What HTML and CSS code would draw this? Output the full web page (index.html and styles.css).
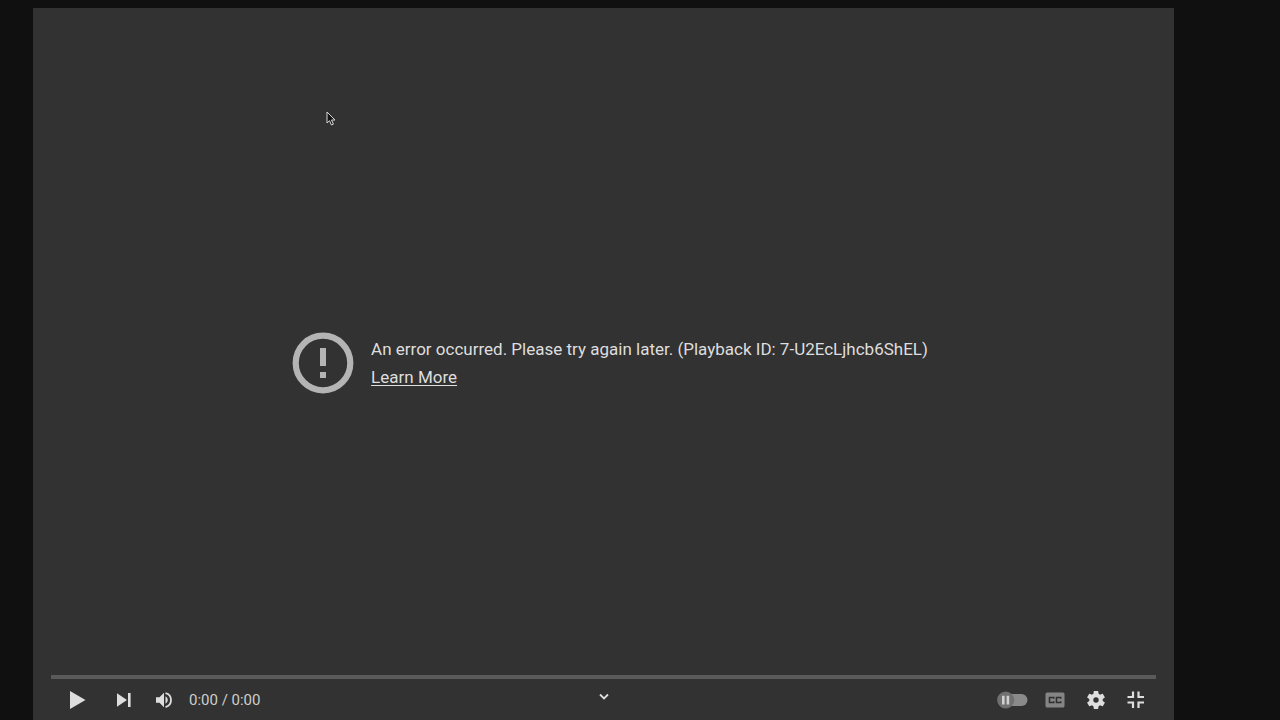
FILE: index.html
```html
<!DOCTYPE html>
<html lang="en">
<head>
<meta charset="utf-8">
<title>Video player</title>
<meta name="viewport" content="width=device-width, initial-scale=1">
<link rel="stylesheet" href="styles.css">
</head>
<body>
<main class="player">
  <section class="error" role="alert">
    <svg class="error-icon" viewBox="0 0 62 62" aria-hidden="true">
      <circle cx="31" cy="31" r="27.3" fill="none" stroke="currentColor" stroke-width="6.2"/>
      <path d="M28 16h6v18h-6zM28 40h6v6h-6z" fill="currentColor"/>
    </svg>
    <div class="error-text">
      <p class="error-line">An error occurred. Please try again later. (Playback ID: 7-U2EcLjhcb6ShEL)</p>
      <a class="error-link" href="#">Learn More</a>
    </div>
  </section>
  <footer class="chrome">
    <div class="progress"></div>
    <div class="controls">
      <div class="group group-left">
        <button class="btn btn-play" type="button" aria-label="Play">
          <svg width="16" height="20" viewBox="0 0 16 20"><path d="M0 1l15.500 9L0 19z" fill="currentColor"/></svg>
        </button>
        <button class="btn btn-next" type="button" aria-label="Next">
          <svg width="16" height="16" viewBox="0 0 16 16"><path d="M1 1.200L11 8 1 14.800zM12 1h2.600v14H12z" fill="currentColor"/></svg>
        </button>
        <button class="btn btn-volume" type="button" aria-label="Mute">
          <svg width="18" height="18" viewBox="0 0 18 18"><path d="M1 6.200h3.500L9 1.700v14.600l-4.500-4.500H1z" fill="currentColor"/><path d="M10.500 5.200a4.300 4.300 0 0 1 0 7.600z" fill="currentColor"/><path d="M10.500 2a7.200 7.200 0 0 1 0 14" fill="none" stroke="currentColor" stroke-width="1.800"/></svg>
        </button>
        <span class="time">0:00 / 0:00</span>
      </div>
      <button class="btn btn-more" type="button" aria-label="Show more">
        <svg width="10" height="8" viewBox="0 0 10 8"><path d="M1 1.500l4 4 4-4" fill="none" stroke="currentColor" stroke-width="1.800"/></svg>
      </button>
      <div class="group group-right">
        <button class="btn btn-autoplay" type="button" aria-label="Autoplay">
          <svg width="32" height="18" viewBox="0 0 32 18"><rect x="8" y="3" width="22.500" height="12" rx="6" fill="#8a8a8a"/><circle cx="8.700" cy="9" r="8.600" fill="#707070"/><path d="M5 4.800h2.600v8.600H5zM9.600 4.800h2.600v8.600H9.600z" fill="#d0d0d0"/></svg>
        </button>
        <button class="btn btn-captions" type="button" aria-label="Subtitles">
          <svg width="20" height="16" viewBox="0 0 20 16"><rect x=".5" y=".5" width="19" height="15" rx="1.500" fill="#858585"/><path d="M8.700 6.800V5.500H4.500v5h4.200V9.200M15.700 6.800V5.500h-4.200v5h4.200V9.200" fill="none" stroke="#303030" stroke-width="1.600"/></svg>
        </button>
        <button class="btn btn-settings" type="button" aria-label="Settings">
          <svg width="18" height="18" viewBox="2 2 20 20"><path fill="currentColor" d="M19.430 12.980c.04-.32.07-.64.07-.98s-.03-.66-.07-.98l2.110-1.650c.19-.15.24-.42.12-.64l-2-3.460c-.12-.22-.39-.3-.61-.22l-2.490 1c-.52-.4-1.080-.73-1.690-.98l-.38-2.650C14.460 2.180 14.250 2 14 2h-4c-.25 0-.46.18-.49.42l-.38 2.650c-.61.25-1.170.59-1.690.98l-2.490-1c-.23-.09-.49 0-.61.22l-2 3.460c-.13.22-.07.49.12.64l2.110 1.650c-.04.32-.07.65-.07.98s.03.66.07.98l-2.110 1.650c-.19.15-.24.42-.12.64l2 3.460c.12.22.39.3.61.22l2.490-1c.52.4 1.080.73 1.690.98l.38 2.650c.03.24.24.42.49.42h4c.25 0 .46-.18.49-.42l.38-2.650c.61-.25 1.170-.59 1.690-.98l2.490 1c.23.09.49 0 .61-.22l2-3.460c.12-.22.07-.49-.12-.64zM12 15a3 3 0 1 1 0-6 3 3 0 0 1 0 6z"/></svg>
        </button>
        <button class="btn btn-fullscreen" type="button" aria-label="Exit full screen">
          <svg width="18" height="18" viewBox="0 0 18 18"><path d="M.5 6H6V.5M11.500.5V6H17M17 11.500h-5.500V17M6 17v-5.500H.5" fill="none" stroke="currentColor" stroke-width="2.200"/></svg>
        </button>
      </div>
    </div>
  </footer>
</main>
<svg class="pointer" width="10" height="16" viewBox="0 0 10 16" aria-hidden="true"><path d="M1 1v11l2.500-2.300 1.900 4.300 2-.9-1.900-4.100H9z" fill="#151515" stroke="#d8d8d8" stroke-width="1"/></svg>
</body>
</html>
```
FILE: styles.css
```css
* {
  box-sizing: border-box;
}

body {
  margin: 0;
  min-height: 100vh;
  display: flex;
  padding: 8px 106px 0 33px;
  background: #101010;
  color: #dedede;
  font-family: Roboto, "Liberation Sans", sans-serif;
}

.player {
  flex: 1;
  display: grid;
  grid-template: 1fr / 1fr;
  background: #323232;
}

.error,
.chrome {
  grid-area: 1 / 1;
}

.error {
  display: flex;
  align-items: center;
  justify-content: center;
  gap: 17px;
  padding: 0 0 2px 13px;
}

.error-icon {
  flex: none;
  width: 62px;
  height: 62px;
  color: #b4b4b4;
}

.error-text {
  font-size: 17px;
  line-height: 28px;
}

.error-line {
  margin: 0;
}

.error-link {
  color: inherit;
  text-decoration: underline;
  text-underline-offset: 2px;
}

.chrome {
  align-self: end;
  padding: 0 18px;
}

.progress {
  height: 4px;
  background: #5a5a5a;
}

.controls {
  display: grid;
  grid-template-columns: 1fr auto 1fr;
  align-items: center;
  height: 41px;
}

.group {
  display: flex;
  align-items: center;
}

.group-left {
  padding-left: 19px;
}

.group-right {
  justify-content: flex-end;
  gap: 16px;
  padding-right: 11px;
}

.btn {
  display: flex;
  padding: 0;
  border: 0;
  background: none;
  color: #dedede;
  cursor: pointer;
}

.btn svg {
  display: block;
}

.btn-next {
  margin-left: 30px;
}

.btn-volume {
  margin-left: 23px;
}

.btn-more {
  padding-bottom: 6px;
}

.btn-settings,
.btn-fullscreen {
  margin-left: 6px;
}

.time {
  margin-left: 16px;
  font-size: 15px;
  line-height: 20px;
  color: #cecece;
}

.pointer {
  position: absolute;
  left: 326px;
  top: 111px;
  pointer-events: none;
}
```
